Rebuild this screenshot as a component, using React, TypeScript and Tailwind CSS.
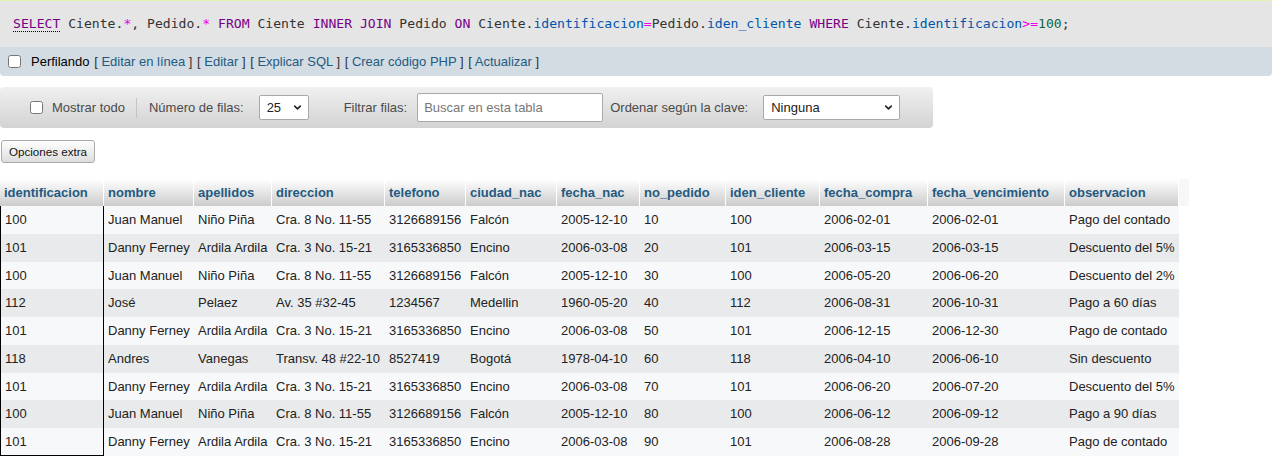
import { ChevronDown } from "lucide-react";

const columns = [
  { name: "identificacion", w: "w-[104px]" },
  { name: "nombre", w: "w-[90px]" },
  { name: "apellidos", w: "w-[78px]" },
  { name: "direccion", w: "w-[113px]" },
  { name: "telefono", w: "w-[81px]" },
  { name: "ciudad_nac", w: "w-[91px]" },
  { name: "fecha_nac", w: "w-[83px]" },
  { name: "no_pedido", w: "w-[86px]" },
  { name: "iden_cliente", w: "w-[94px]" },
  { name: "fecha_compra", w: "w-[108px]" },
  { name: "fecha_vencimiento", w: "w-[137px]" },
  { name: "observacion", w: "w-[113px]" },
];

const rows = [
  ["100", "Juan Manuel", "Niño Piña", "Cra. 8 No. 11-55", "3126689156", "Falcón", "2005-12-10", "10", "100", "2006-02-01", "2006-02-01", "Pago del contado"],
  ["101", "Danny Ferney", "Ardila Ardila", "Cra. 3 No. 15-21", "3165336850", "Encino", "2006-03-08", "20", "101", "2006-03-15", "2006-03-15", "Descuento del 5%"],
  ["100", "Juan Manuel", "Niño Piña", "Cra. 8 No. 11-55", "3126689156", "Falcón", "2005-12-10", "30", "100", "2006-05-20", "2006-06-20", "Descuento del 2%"],
  ["112", "José", "Pelaez", "Av. 35 #32-45", "1234567", "Medellin", "1960-05-20", "40", "112", "2006-08-31", "2006-10-31", "Pago a 60 días"],
  ["101", "Danny Ferney", "Ardila Ardila", "Cra. 3 No. 15-21", "3165336850", "Encino", "2006-03-08", "50", "101", "2006-12-15", "2006-12-30", "Pago de contado"],
  ["118", "Andres", "Vanegas", "Transv. 48 #22-10", "8527419", "Bogotá", "1978-04-10", "60", "118", "2006-04-10", "2006-06-10", "Sin descuento"],
  ["101", "Danny Ferney", "Ardila Ardila", "Cra. 3 No. 15-21", "3165336850", "Encino", "2006-03-08", "70", "101", "2006-06-20", "2006-07-20", "Descuento del 5%"],
  ["100", "Juan Manuel", "Niño Piña", "Cra. 8 No. 11-55", "3126689156", "Falcón", "2005-12-10", "80", "100", "2006-06-12", "2006-09-12", "Pago a 90 días"],
  ["101", "Danny Ferney", "Ardila Ardila", "Cra. 3 No. 15-21", "3165336850", "Encino", "2006-03-08", "90", "101", "2006-08-28", "2006-09-28", "Pago de contado"],
];

function SqlLine() {
  const kw = "text-[#770088]";
  const op = "text-[#ee00ee]";
  const v2 = "text-[#0055aa]";
  return (
    <div className="h-[47px] border-t border-[#e3f5b3] bg-[#e5e5e5] pl-[13px] pt-[14px] font-['DejaVu_Sans_Mono',monospace] text-[13.1px] leading-[17px] text-[#333] whitespace-pre">
      <span className={`${kw} border-b border-dotted border-black`}>SELECT</span> Ciente.
      <span className={op}>*</span>, Pedido.<span className={op}>*</span> <span className={kw}>FROM</span> Ciente{" "}
      <span className={kw}>INNER JOIN</span> Pedido <span className={kw}>ON</span> Ciente.
      <span className={v2}>identificacion</span>
      <span className={op}>=</span>Pedido.<span className={v2}>iden_cliente</span> <span className={kw}>WHERE</span> Ciente.
      <span className={v2}>identificacion</span>
      <span className={op}>&gt;=</span>
      <span className="text-[#116644]">100</span>;
    </div>
  );
}

function ToolsBar() {
  const links = ["Editar en línea", "Editar", "Explicar SQL", "Crear código PHP", "Actualizar"];
  return (
    <div className="flex h-[29px] items-center rounded-b-[4px] bg-[#d3dce3] pl-[8px] text-[13px] text-black">
      <input type="checkbox" className="m-0 h-[13px] w-[13px]" />
      <span className="ml-[10px]">Perfilando</span>
      {links.map((l) => (
        <span key={l} className="ml-[4.6px]">
          <span className="text-[#333]">[</span> <span className="text-[#235a81]">{l}</span>{" "}
          <span className="text-[#333]">]</span>
        </span>
      ))}
    </div>
  );
}

function Select({ value, w }: { value: string; w: string }) {
  return (
    <div className={`relative h-[25px] ${w}`}>
      <select
        defaultValue={value}
        className="h-full w-full appearance-none rounded-[2px] border border-[#aaa] bg-white pl-[7px] text-[13px] text-[#222]"
      >
        <option>{value}</option>
      </select>
      <ChevronDown
        size={11}
        strokeWidth={3.5}
        className="pointer-events-none absolute right-[6px] top-[7px] text-[#222]"
      />
    </div>
  );
}

function NavBar() {
  return (
    <div className="mt-[11px] flex h-[41px] w-[933px] items-center rounded-[4px] bg-linear-to-b from-[#f0f0f0] to-[#d3d3d3] pl-[30px] text-[13px] text-[#4a4a4a]">
      <input type="checkbox" className="m-0 h-[13px] w-[13px]" />
      <span className="ml-[9px]">Mostrar todo</span>
      <span className="ml-[11px] h-[20px] w-px bg-[#c4c4c4]" />
      <span className="ml-[12px]">Número de filas:</span>
      <div className="ml-[15px]">
        <Select value="25" w="w-[50px]" />
      </div>
      <span className="ml-[35px]">Filtrar filas:</span>
      <input
        placeholder="Buscar en esta tabla"
        className="ml-[10px] h-[29px] w-[186px] rounded-[2px] border border-[#aaa] bg-white px-[6px] text-[13px] text-[#222] placeholder:text-[#777]"
      />
      <span className="ml-[7px]">Ordenar según la clave:</span>
      <div className="ml-[15px]">
        <Select value="Ninguna" w="w-[137px]" />
      </div>
    </div>
  );
}

function DataTable() {
  return (
    <table className="mt-[16px] table-fixed border-separate border-spacing-0 text-[13px]">
      <thead>
        <tr>
          {columns.map((c) => (
            <th
              key={c.name}
              className={`${c.w} h-[27px] border-r border-white bg-linear-to-b from-white to-[#cccccc] px-[4px] text-left font-bold whitespace-nowrap text-[#235a81]`}
            >
              {c.name}
            </th>
          ))}
          <th className="w-[10px] bg-[#f6f7f8]" />
        </tr>
      </thead>
      <tbody>
        {rows.map((r, i) => {
          const bg = i % 2 === 0 ? "bg-[#f7f8f9]" : "bg-[#e9eaeb]";
          const last = i === rows.length - 1;
          return (
            <tr key={i}>
              {r.map((cell, j) => (
                <td
                  key={j}
                  className={`h-[27.75px] px-[4px] whitespace-nowrap text-[#222] ${bg} ${
                    j === 0 ? `border-x border-black pl-[4px] ${last ? "border-b" : ""}` : ""
                  }`}
                >
                  {cell}
                </td>
              ))}
              <td />
            </tr>
          );
        })}
      </tbody>
    </table>
  );
}

export default function App() {
  return (
    <div className="h-[466px] w-[1272px] overflow-hidden bg-white font-['Liberation_Sans',Arial,sans-serif]">
      <SqlLine />
      <ToolsBar />
      <NavBar />
      <button className="ml-[1px] mt-[12px] block h-[23px] w-[94px] rounded-[3px] border border-[#aaa] bg-linear-to-b from-white to-[#dddddd] text-[11.6px] text-[#111]">
        Opciones extra
      </button>
      <DataTable />
    </div>
  );
}
